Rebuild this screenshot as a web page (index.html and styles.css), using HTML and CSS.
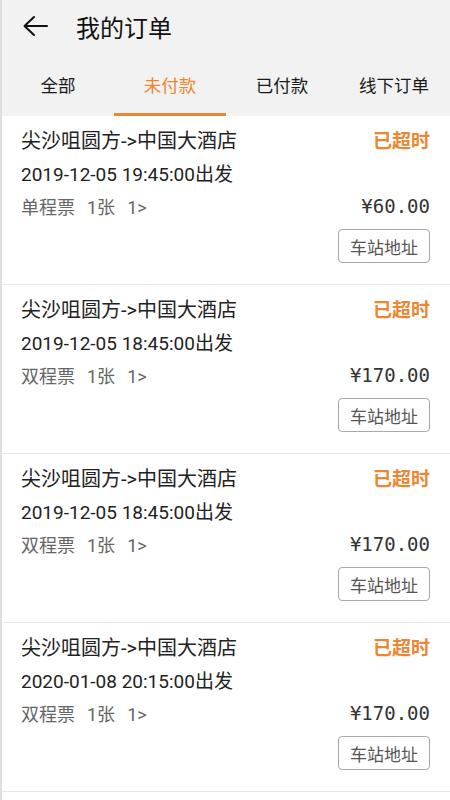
FILE: index.html
```html
<!DOCTYPE html>
<html lang="zh-CN">
<head>
    <meta charset="UTF-8">
    <title>我的订单</title>
    <meta name="viewport" content="width=device-width, initial-scale=1.0">
    <link rel="stylesheet" href="styles.css">
</head>
<body>
<div class="page">
    <header class="topbar">
        <a class="back" href="#">
            <svg width="26" height="22" viewBox="0 0 26 22">
                <path d="M12 2 L2.5 11 L12 20 M2.5 11 H25" fill="none" stroke="#111" stroke-width="2" stroke-linecap="round" stroke-linejoin="round"/>
            </svg>
        </a>
        <h1>我的订单</h1>
    </header>

    <nav class="tabs">
        <a href="#">全部</a>
        <a href="#" class="on">未付款</a>
        <a href="#">已付款</a>
        <a href="#">线下订单</a>
    </nav>

    <ul class="list">
        <li class="order">
            <div class="row">
                <span class="route">尖沙咀圆方-&gt;中国大酒店</span>
                <span class="state">已超时</span>
            </div>
            <div class="row date">2019-12-05 19:45:00出发</div>
            <div class="row">
                <span class="info"><i>单程票</i><i>1张</i><i>1&gt;</i></span>
                <span class="price">¥60.00</span>
            </div>
            <div class="ops"><a href="#" class="btn">车站地址</a></div>
        </li>
        <li class="order">
            <div class="row">
                <span class="route">尖沙咀圆方-&gt;中国大酒店</span>
                <span class="state">已超时</span>
            </div>
            <div class="row date">2019-12-05 18:45:00出发</div>
            <div class="row">
                <span class="info"><i>双程票</i><i>1张</i><i>1&gt;</i></span>
                <span class="price">¥170.00</span>
            </div>
            <div class="ops"><a href="#" class="btn">车站地址</a></div>
        </li>
        <li class="order">
            <div class="row">
                <span class="route">尖沙咀圆方-&gt;中国大酒店</span>
                <span class="state">已超时</span>
            </div>
            <div class="row date">2019-12-05 18:45:00出发</div>
            <div class="row">
                <span class="info"><i>双程票</i><i>1张</i><i>1&gt;</i></span>
                <span class="price">¥170.00</span>
            </div>
            <div class="ops"><a href="#" class="btn">车站地址</a></div>
        </li>
        <li class="order">
            <div class="row">
                <span class="route">尖沙咀圆方-&gt;中国大酒店</span>
                <span class="state">已超时</span>
            </div>
            <div class="row date">2020-01-08 20:15:00出发</div>
            <div class="row">
                <span class="info"><i>双程票</i><i>1张</i><i>1&gt;</i></span>
                <span class="price">¥170.00</span>
            </div>
            <div class="ops"><a href="#" class="btn">车站地址</a></div>
        </li>
    </ul>
</div>
</body>
</html>
```

FILE: styles.css
```css
* {
    margin: 0;
    padding: 0;
    box-sizing: border-box;
}

html, body {
    height: 100%;
}

body {
    font-family: Roboto, "Noto Sans CJK SC", sans-serif;
    color: #222;
    background: #fff;
}

a {
    text-decoration: none;
    color: inherit;
}

.page {
    min-height: 100%;
    border-left: 2px solid #dedede;
    background: #fff;
}

/* 顶部标题栏 */
.topbar {
    height: 52px;
    display: flex;
    align-items: center;
    background: #f2f2f2;
}

.topbar .back {
    display: flex;
    width: 26px;
    margin-left: 20px;
}

.topbar h1 {
    margin-left: 28px;
    font-size: 24px;
    font-weight: normal;
    color: #111;
}

/* tab */
.tabs {
    display: grid;
    grid-template-columns: repeat(4, 1fr);
    height: 64px;
    background: #f2f2f2;
}

.tabs a {
    display: flex;
    align-items: center;
    justify-content: center;
    padding-top: 3px;
    font-size: 17.5px;
    color: #1a1a1a;
    border-bottom: 3px solid transparent;
}

.tabs a.on {
    color: #ec8631;
    border-bottom-color: #ec8631;
}

/* 订单列表 */
.list {
    list-style: none;
}

.order {
    padding: 7px 20px 21px 19px;
    border-bottom: 1px solid #e8e8e8;
}

.order .row {
    display: flex;
    justify-content: space-between;
    align-items: center;
    height: 33px;
}

.route {
    font-size: 20px;
    color: #222;
}

.state {
    font-size: 19px;
    font-weight: bold;
    color: #ec8631;
}

.date {
    font-size: 19px;
    color: #222;
}

.info {
    font-size: 18px;
    color: #666;
}

.info i {
    font-style: normal;
    margin-right: 12px;
}

.price {
    font-family: "DejaVu Sans Mono", monospace;
    font-size: 19px;
    color: #333;
}

.ops {
    display: flex;
    justify-content: flex-end;
    margin-top: 7px;
}

.btn {
    display: flex;
    align-items: center;
    justify-content: center;
    width: 92px;
    height: 34px;
    border: 1px solid #a8a8a8;
    border-radius: 4px;
    font-size: 17px;
    color: #555;
}
```
